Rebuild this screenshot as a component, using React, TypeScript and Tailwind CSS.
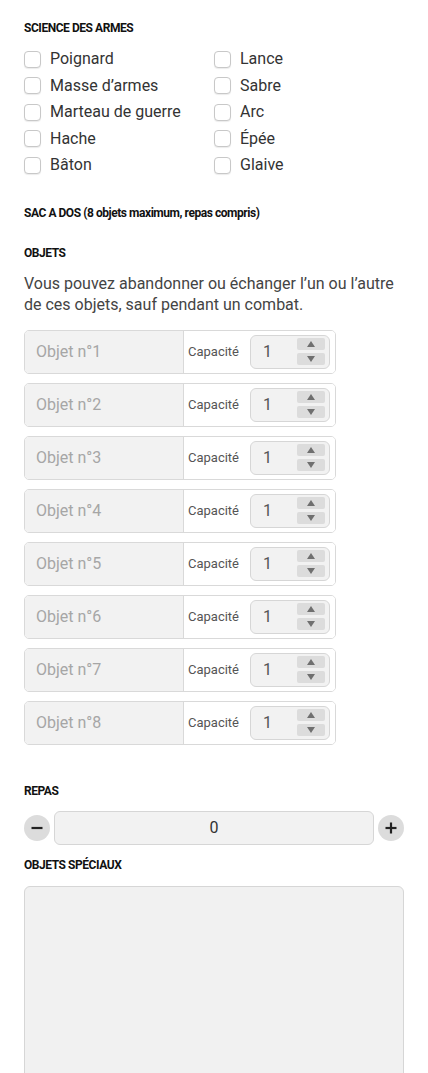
import React from 'react';

const armes = [
  ['Poignard', 'Lance'],
  ['Masse d\u2019armes', 'Sabre'],
  ['Marteau de guerre', 'Arc'],
  ['Hache', 'Épée'],
  ['Bâton', 'Glaive'],
];

const Heading: React.FC<{ children: React.ReactNode; className?: string; upper?: boolean }> = ({
  children,
  className = '',
  upper = true,
}) => (
  <h3
    className={`text-[12px] leading-4 font-bold tracking-[-0.45px] text-[#111] ${upper ? 'uppercase' : ''} ${className}`}
  >
    {children}
  </h3>
);

const Check: React.FC<{ label: string }> = ({ label }) => (
  <label className="flex items-center h-[26.5px]">
    <span className="w-[17px] h-[17px] rounded-[4px] border border-[#c8c8c8] bg-white shadow-[0_1px_1px_rgba(0,0,0,0.08)]" />
    <span className="ml-[9px] text-[16px] text-[#333]">{label}</span>
  </label>
);

const Spinner: React.FC = () => (
  <div className="flex flex-col gap-[3px] w-[28px]">
    <div className="h-[12px] rounded-[2px] bg-[#dcdcdc] flex items-center justify-center">
      <svg width="8" height="6" viewBox="0 0 8 6"><path d="M4 0 L8 6 L0 6 Z" fill="#6f6f6f" /></svg>
    </div>
    <div className="h-[12px] rounded-[2px] bg-[#dcdcdc] flex items-center justify-center">
      <svg width="8" height="6" viewBox="0 0 8 6"><path d="M0 0 L8 0 L4 6 Z" fill="#6f6f6f" /></svg>
    </div>
  </div>
);

const ObjetRow: React.FC<{ n: number }> = ({ n }) => (
  <div className="flex h-[44px] w-[312px] rounded-[5px] border border-[#d9d9d9] overflow-hidden">
    <div className="w-[159px] bg-[#f2f2f2] border-r border-[#d9d9d9] flex items-center pl-[11px] text-[16px] text-[#a6a6a6]">
      Objet n°{n}
    </div>
    <div className="flex-1 bg-white flex items-center">
      <span className="ml-[4px] text-[13px] text-[#555]">Capacité</span>
      <div className="ml-[11px] w-[80px] h-[34px] rounded-[6px] border border-[#d6d6d6] bg-[#f2f2f2] flex items-center justify-between pl-[12px] pr-[4px]">
        <span className="text-[16px] text-[#555]">1</span>
        <Spinner />
      </div>
    </div>
  </div>
);

const RoundBtn: React.FC<{ plus?: boolean }> = ({ plus }) => (
  <button className="w-[26px] h-[26px] rounded-full bg-[#dcdcdc] flex items-center justify-center shrink-0">
    <svg width="14" height="14" viewBox="0 0 14 14">
      <path d="M1.5 7 H12.5" stroke="#222" strokeWidth="2.2" />
      {plus && <path d="M7 1.5 V12.5" stroke="#222" strokeWidth="2.2" />}
    </svg>
  </button>
);

const App: React.FC = () => {
  return (
    <div className="min-h-[1073px] bg-white px-6 pt-[20px] font-['Roboto',sans-serif]">
      <Heading>Science des armes</Heading>
      <div className="grid grid-cols-2 mt-[10px]">
        {armes.map(([a, b]) => (
          <React.Fragment key={a}>
            <Check label={a} />
            <Check label={b} />
          </React.Fragment>
        ))}
      </div>

      <Heading className="mt-[26.5px]" upper={false}>SAC A DOS (8 objets maximum, repas compris)</Heading>
      <Heading className="mt-[24px]">Objets</Heading>
      <p className="mt-[11.5px] text-[16px] leading-[21px] text-[#444]">
        Vous pouvez abandonner ou échanger l’un ou l’autre de ces objets, sauf pendant un combat.
      </p>

      <div className="mt-[15px] flex flex-col gap-[9px]">
        {[1, 2, 3, 4, 5, 6, 7, 8].map((n) => (
          <ObjetRow key={n} n={n} />
        ))}
      </div>

      <Heading className="mt-[38px]">Repas</Heading>
      <div className="mt-[12px] flex items-center gap-[4px]">
        <RoundBtn />
        <div className="flex-1 h-[34px] rounded-[6px] border border-[#d6d6d6] bg-[#f2f2f2] flex items-center justify-center text-[16px] text-[#333]">
          0
        </div>
        <RoundBtn plus />
      </div>

      <Heading className="mt-[12px]">Objets spéciaux</Heading>
      <div className="mt-[13px] h-[220px] rounded-[6px] border border-[#d6d6d6] bg-[#f1f1f1]" />
    </div>
  );
};

export default App;
